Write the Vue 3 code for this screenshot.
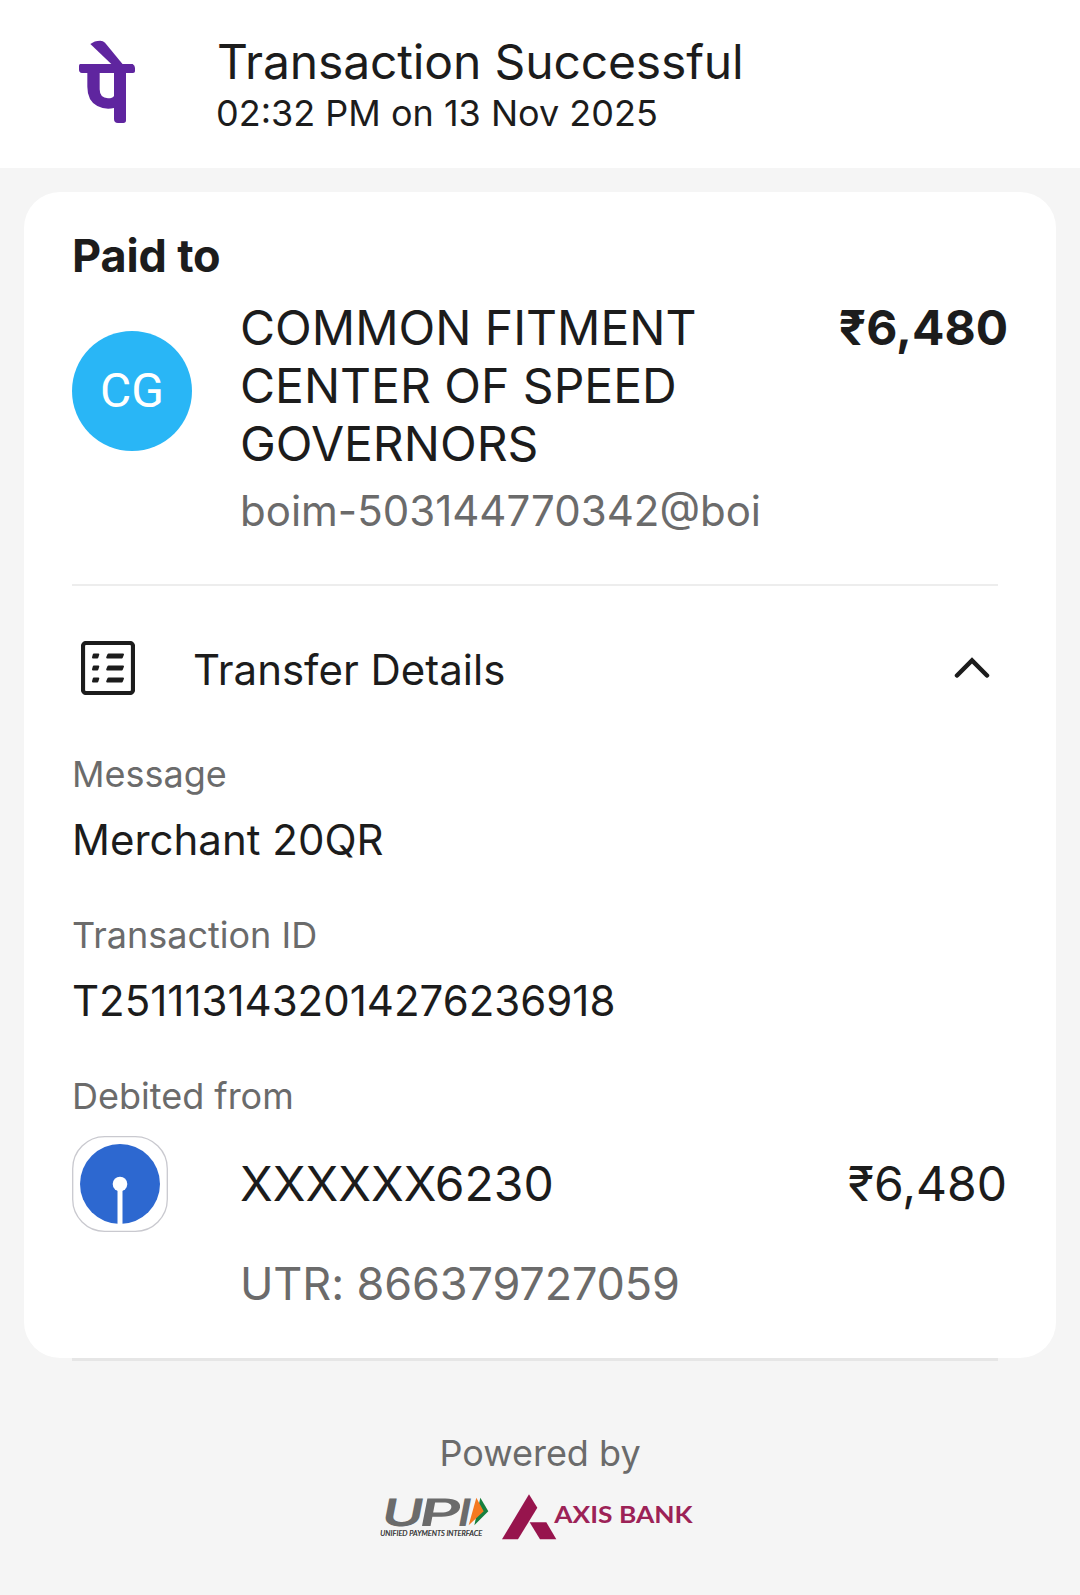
<script setup>
const payee = {
  initials: 'CG',
  lines: ['COMMON FITMENT', 'CENTER OF SPEED', 'GOVERNORS'],
  vpaName: 'boim-503144770342',
  vpaBank: 'boi',
}
const amount = '₹6,480'
const details = [
  { label: 'Message', value: 'Merchant 20QR', cls: 'message' },
  { label: 'Transaction ID', value: 'T2511131432014276236918', cls: 'txn' },
]
</script>

<template>
  <main class="receipt">
    <header class="top">
      <svg class="brand" viewBox="48 60 180 252" aria-label="PhonePe">
        <g fill="#5f259f">
          <path d="M91 72q12-10 30-10q8 0 14 6L190 135H157Z" />
          <path d="M60 132H218q7 4 7 12v10q0 5-6 5H198V301q0 8-8 8H174q-12 0-12-12V264Q135 270 112 258Q82 242 82 200V159H66q-9-1-9-10V138q0-5 3-6ZM119 159V208Q119 234 144 235Q158 235 162 228V159Z" />
        </g>
      </svg>
      <div class="heading">
        <h1><span>Transaction Successful</span></h1>
        <p><span>02:32 PM on 13 Nov 2025</span></p>
      </div>
    </header>

    <section class="card">
      <h2><span>Paid to</span></h2>
      <div class="payee">
        <div class="avatar">{{ payee.initials }}</div>
        <div class="who">
          <div v-for="line in payee.lines" :key="line" class="name"><span>{{ line }}</span></div>
          <div class="vpa">{{ payee.vpaName }}<span class="at">@</span>{{ payee.vpaBank }}</div>
        </div>
        <div class="amount strong"><span>{{ amount }}</span></div>
      </div>
      <hr />
      <div class="toggle">
        <svg class="list" viewBox="0 0 54 54" fill="none" stroke="#1c1c1c">
          <rect x="2" y="2" width="50" height="50" rx="3" stroke-width="4.2" />
          <path fill="#1c1c1c" stroke-width="2" stroke-linejoin="round" d="M12.800 13.500h4.500l-1 3h-4.300zM27.500 13.500h14.500l-1.200 3H26.200zM12.800 25.500h4.500l-1 3h-4.300zM27.500 25.500h14.500l-1.200 3H26.200zM12.800 37.500h4.500l-1 3h-4.300zM27.500 37.500h14.500l-1.200 3H26.200z" />
        </svg>
        <span class="toggle-title">Transfer Details</span>
        <svg class="chevron" viewBox="0 0 36 24" fill="none" stroke="#1c1c1c" stroke-width="4.500" stroke-linecap="round">
          <path d="M3 19.500L18 4.500L33 19.500" />
        </svg>
      </div>
      <div v-for="d in details" :key="d.label" class="detail" :class="d.cls">
        <div class="label"><span>{{ d.label }}</span></div>
        <div class="value"><span>{{ d.value }}</span></div>
      </div>
      <div class="label debited"><span>Debited from</span></div>
      <div class="account">
        <svg class="bank" viewBox="0 0 96 96">
          <rect x=".7" y=".7" width="94.600" height="94.600" rx="32" fill="#fff" stroke="#c9c9cf" stroke-width="1.300" />
          <circle cx="48" cy="48" r="40" fill="#2d68d0" />
          <path d="M48 48V89" stroke="#fff" stroke-width="5" />
          <circle cx="48" cy="48" r="7.300" fill="#fff" />
        </svg>
        <span class="number">XXXXXX6230</span>
        <div class="amount debit"><span>{{ amount }}</span></div>
      </div>
      <div class="utr"><span>UTR: 866379727059</span></div>
    </section>
    <hr class="edge" />

    <footer>
      <p><span>Powered by</span></p>
      <svg class="partners" viewBox="60 39 942 144">
        <g class="upi" transform="translate(0 137) skewX(-11)">
          <text x="59" textLength="126" lengthAdjust="spacingAndGlyphs">U</text>
          <text x="172" textLength="126" lengthAdjust="spacingAndGlyphs">P</text>
          <text x="287" textLength="40" lengthAdjust="spacingAndGlyphs">I</text>
        </g>
        <path d="M361 53L385 94L343 136Z" fill="#16803f" />
        <path d="M349 53L371 94L326 136Z" fill="#f47920" />
        <text x="61" y="167" class="upi-sub" textLength="306" lengthAdjust="spacingAndGlyphs">UNIFIED PAYMENTS INTERFACE</text>
        <g fill="#97144d">
          <path d="M507 43L532 83L474 178H426Z" />
          <path d="M509 127H559L589 178H540Z" />
          <text x="583" y="128" class="axis" textLength="415" lengthAdjust="spacingAndGlyphs">AXIS BANK</text>
        </g>
      </svg>
    </footer>
  </main>
</template>

<style>
body { margin: 0; background: #f5f5f5; }
</style>

<style scoped>
.receipt {
  width: 1080px;
  height: 1595px;
  background: #f5f5f5;
  color: #1c1c1c;
  font-family: Inter, "Liberation Sans", sans-serif;
  overflow: hidden;
}
h1, h2, p { margin: 0; font-weight: 400; }
.top {
  box-sizing: border-box;
  height: 168px;
  padding: 32px 0 0 76px;
  display: flex;
  background: #fff;
}
.brand { width: 60px; height: 84px; margin: 8px 81px 0 0; }
h1 { font-size: 48px; line-height: 60px; letter-spacing: -.15px; }
.top p { margin: -1px 0 0 -1px; font-size: 36px; line-height: 44px; }
.card {
  box-sizing: border-box;
  height: 1166px;
  margin: 24px 24px 0;
  padding: 38px 48px 0;
  border-radius: 36px;
  background: #fff;
}
h2 { font-size: 45px; line-height: 52px; font-weight: 700; letter-spacing: -.15px; }
.payee { display: flex; margin-top: 17px; align-items: flex-start; }
.avatar {
  width: 120px;
  height: 120px;
  margin: 32px 48px 0 0;
  border-radius: 50%;
  background: #29b6f6;
  color: #fff;
  font: 48px/120px Roboto, sans-serif;
  text-align: center;
}
.name { font-size: 48px; line-height: 58px; white-space: nowrap; }
.vpa { margin-top: 13px; font-size: 42px; line-height: 50px; color: #6b6b6b; }
.at { font-feature-settings: "case"; }
.amount { margin-left: auto; font-size: 48px; line-height: 58px; }
.debit { margin-right: 1px; }
.strong { font-weight: 700; }
hr { height: 2px; margin: 48px 10px 0 0; border: 0; background: #ededed; }
.toggle { display: flex; align-items: center; height: 54px; margin-top: 55px; padding: 0 18px 0 9px; }
.list { width: 54px; height: 54px; }
.toggle-title { margin: 3px 0 0 58px; font-size: 42px; line-height: 50px; }
.chevron { width: 36px; height: 24px; margin-left: auto; }
.label { font-size: 36px; line-height: 44px; color: #6b6b6b; }
.value { margin-top: 19px; font-size: 42px; line-height: 50px; }
.message { margin-top: 57px; }
.txn, .debited { margin-top: 48px; }
.account { display: flex; align-items: center; height: 96px; margin-top: 18px; }
.bank { width: 96px; height: 96px; margin-right: 72px; }
.number { font-size: 48px; line-height: 58px; }
.utr { margin: 25px 0 0 168px; font-size: 45px; line-height: 54px; color: #6b6b6b; letter-spacing: -.12px; }
.edge { height: 3px; margin: 0 82px 0 72px; background: #e6e6e6; }
footer { display: flex; flex-direction: column; align-items: center; padding: 70px 0 0; }
footer p { font-size: 36px; line-height: 44px; color: #6b6b6b; }
.partners { width: 314px; height: 48px; margin: 18px 6px 0 0; overflow: visible; }
.upi { font: 600 114px Inter, sans-serif; fill: #6b6b6b; }
.upi-sub { font: italic 21px Lato, sans-serif; fill: #222; stroke: #222; stroke-width: .5px; }
.axis { font: 700 67px Lato, sans-serif; fill: #9c2257; }
</style>
